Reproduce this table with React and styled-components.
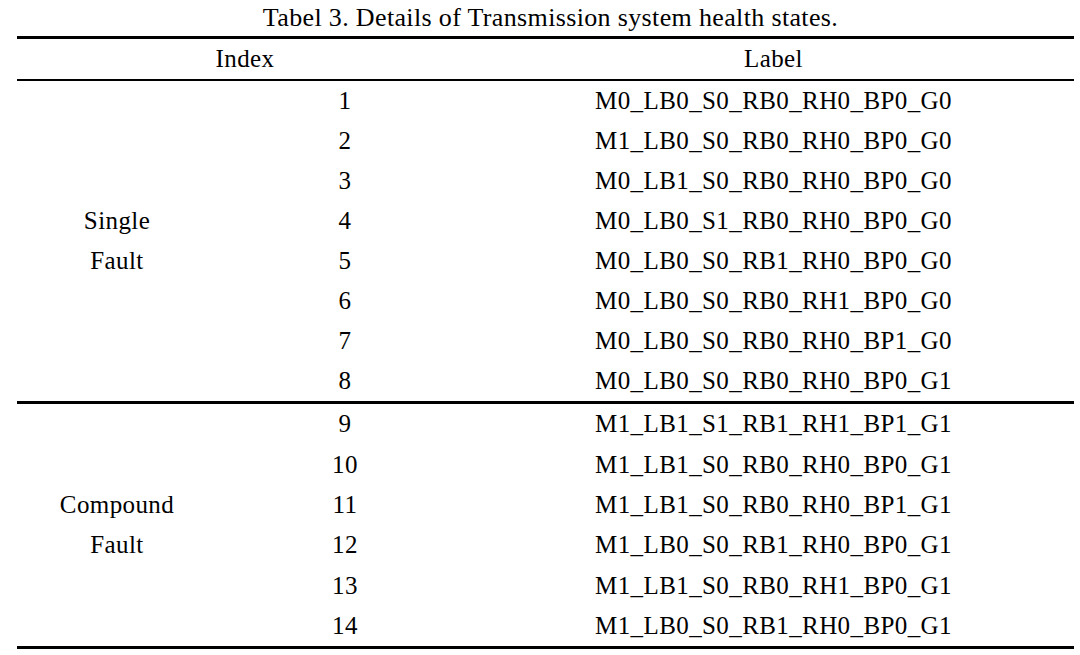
import React from 'react';
import styled, { createGlobalStyle } from 'styled-components';

const GlobalStyle = createGlobalStyle`
  body {
    margin: 0;
    background: #fff;
    color: #000;
    font-family: "Liberation Serif", "Times New Roman", serif;
  }
`;

const Page = styled.div`
  width: 1080px;
  height: 655px;
  padding: 0 6px 0 17px;
  box-sizing: border-box;
`;

const Caption = styled.div`
  height: 36px;
  line-height: 36px;
  text-align: center;
  font-size: 26px;
  letter-spacing: 0.35px;
  padding-left: 10px;
`;

const Table = styled.table`
  width: 100%;
  border-spacing: 0;
  table-layout: fixed;
  font-size: 25px;
  letter-spacing: 0.4px;
`;

const HeadCell = styled.th`
  font-weight: normal;
  height: 40px;
  padding: 0;
  text-align: center;
  border-top: 3px solid #000;
  border-bottom: 2px solid #000;
`;

const Cell = styled.td`
  height: ${(p) => p.$h || 40}px;
  padding: 0;
  text-align: center;
  vertical-align: middle;
  border-bottom: ${(p) => (p.$last ? '3px solid #000' : 'none')};
`;

const GroupCell = styled.td`
  padding: 0;
  text-align: center;
  vertical-align: middle;
  line-height: 40px;
  border-bottom: 3px solid #000;
`;

const groups = [
  {
    name: ['Single', 'Fault'],
    rows: [
      'M0_LB0_S0_RB0_RH0_BP0_G0',
      'M1_LB0_S0_RB0_RH0_BP0_G0',
      'M0_LB1_S0_RB0_RH0_BP0_G0',
      'M0_LB0_S1_RB0_RH0_BP0_G0',
      'M0_LB0_S0_RB1_RH0_BP0_G0',
      'M0_LB0_S0_RB0_RH1_BP0_G0',
      'M0_LB0_S0_RB0_RH0_BP1_G0',
      'M0_LB0_S0_RB0_RH0_BP0_G1',
    ],
  },
  {
    name: ['Compound', 'Fault'],
    rows: [
      'M1_LB1_S1_RB1_RH1_BP1_G1',
      'M1_LB1_S0_RB0_RH0_BP0_G1',
      'M1_LB1_S0_RB0_RH0_BP1_G1',
      'M1_LB0_S0_RB1_RH0_BP0_G1',
      'M1_LB1_S0_RB0_RH1_BP0_G1',
      'M1_LB0_S0_RB1_RH0_BP0_G1',
    ],
  },
];

const App = () => {
  let index = 0;
  return (
    <Page>
      <GlobalStyle />
      <Caption>Tabel 3. Details of Transmission system health states.</Caption>
      <Table>
        <colgroup>
          <col style={{ width: 200 }} />
          <col style={{ width: 256 }} />
          <col />
        </colgroup>
        <thead>
          <tr>
            <HeadCell colSpan={2}>Index</HeadCell>
            <HeadCell>Label</HeadCell>
          </tr>
        </thead>
        <tbody>
          {groups.map((group) =>
            group.rows.map((label, i) => {
              index += 1;
              const last = i === group.rows.length - 1;
              const h = group.rows.length === 6 ? 40.4 : 40;
              return (
                <tr key={label + index}>
                  {i === 0 && (
                    <GroupCell rowSpan={group.rows.length}>
                      {group.name[0]}
                      <br />
                      {group.name[1]}
                    </GroupCell>
                  )}
                  <Cell $h={h} $last={last}>{index}</Cell>
                  <Cell $h={h} $last={last}>{label}</Cell>
                </tr>
              );
            })
          )}
        </tbody>
      </Table>
    </Page>
  );
};

export default App;
